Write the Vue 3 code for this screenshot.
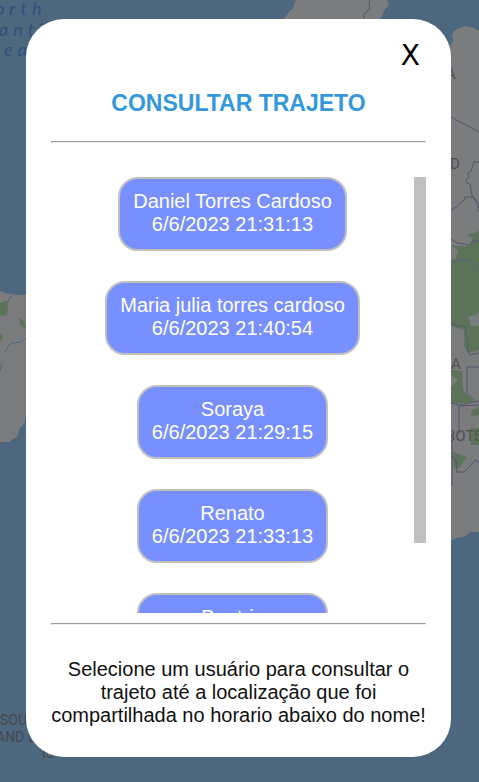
<script setup>
const shares = [
  { name: 'Daniel Torres Cardoso', time: '6/6/2023 21:31:13' },
  { name: 'Maria julia torres cardoso', time: '6/6/2023 21:40:54' },
  { name: 'Soraya', time: '6/6/2023 21:29:15' },
  { name: 'Renato', time: '6/6/2023 21:33:13' },
  { name: 'Beatriz', time: '6/6/2023 21:35:42' },
]
</script>

<template>
  <div class="page">
    <svg class="map" viewBox="0 0 479 782" preserveAspectRatio="xMidYMid slice" aria-hidden="true">
      <rect width="479" height="782" fill="#4d677f" />
      <g fill="#7b7c7e">
        <path d="M296 0H387L389 5L385 9L383 14L381 18L377 20H283L289 12L293 8Z" />
        <path d="M479 31L474 28L466 26L460 28L454 31L452 36L453 40L451 45H440V550L451 541L456 538L466 536L470 532L479 532Z" />
        <path d="M0 291L5 293L12 294L18 295H26H50V415H26L24 424L20 428L18 434L17 437L11 440V442H0Z" />
      </g>
      <g fill="#5d7359">
        <path d="M451 245L457 246L470 246L473 238L468 236L468 234L475 233L479 231V312L472 318L468 321L451 325V252L456 250Z" />
        <path d="M451 323L479 318V350L469 353L464 346V330L451 326Z" />
        <path d="M451 370L462 371L463 390L474 402L451 404V387L458 380L452 376Z" />
        <path d="M472 410L479 407V415L471 417Z" />
        <path d="M453 452L467 457L460 467L454 469Z" />
        <path d="M471 428H479V445H471Z" />
        <path d="M0 303L7 300L8 308L7 315L0 316ZM19 317L24 321L26 329L20 325ZM0 334L3 336L2 340H0Z" />
      </g>
      <g fill="#7b7c7e">
        <path d="M451 246L458 250L456 258L451 260ZM468 317L474 315L479 317V326H471Z" />
        <path d="M451 332L459 331L464 338L459 345L452 340ZM452 355L462 354L464 361L456 366Z" />
      </g>
      <g fill="none" stroke="#56556b" stroke-width="1">
        <path d="M370 0L369 5L370 9L364 14V20M451 117L479 132M479 162H474L471 171L468 173L469 177L466 180L467 183L470 184L472 195L478 203V212M451 210L455 208L465 199V197H473L478 204M451 239L457 243L470 245L473 241L479 241M451 324L454 323L456 326H465L466 335L468 340L467 350L470 355L479 353M479 367H467V393L476 402M451 403L459 405L479 401M459 434V406L479 405M452 434V486M452 457L456 460L457 472L464 472L471 465L475 460L479 462" />
      </g>
      <g fill="none" stroke="#4d677f" stroke-width="1">
        <path d="M12 295L7 303M5 352L9 345L12 343L21 342L26 338M0 371L2 362M451 262L462 260L470 261L479 269" />
      </g>
      <g class="sea" fill="#2f507c">
        <text x="-5" y="15">orth</text>
        <text x="-1" y="36">anti</text>
        <text x="-9" y="56">cea</text>
      </g>
      <g class="land" fill="#505153">
        <text x="446" y="79">A</text>
        <text x="450" y="169">D</text>
        <text x="451" y="369">A</text>
        <text x="446" y="441">BOTSW</text>
      </g>
      <g class="islands" fill="#45484c">
        <text x="0" y="725">SOU</text>
        <text x="-4" y="742">AND S</text>
        <text x="42" y="758">IS</text>
      </g>
    </svg>

    <main class="dialog" role="dialog" aria-labelledby="dialog-title">
      <button class="close" type="button" aria-label="Fechar">X</button>
      <h1 id="dialog-title">CONSULTAR TRAJETO</h1>
      <hr />
      <div class="scroll">
        <div class="list">
          <button v-for="share in shares" :key="share.name" class="share" type="button">
            <span>{{ share.name }}</span>
            <span>{{ share.time }}</span>
          </button>
        </div>
        <div class="track"><div class="thumb"></div></div>
      </div>
      <hr />
      <p>Selecione um usuário para consultar o trajeto até a localização que foi compartilhada no horario abaixo do nome!</p>
    </main>
  </div>
</template>

<style>
body {
  margin: 0;
}
</style>

<style scoped>
.page {
  position: relative;
  box-sizing: border-box;
  height: 100vh;
  overflow: hidden;
  padding: 19px 28px 25px 26px;
  background: #4d677f;
  font-family: "Liberation Sans", Arial, sans-serif;
}
.map {
  position: absolute;
  inset: 0;
  width: 100%;
  height: 100%;
}
.sea {
  font: italic 18px Lato, sans-serif;
  letter-spacing: 5px;
}
.land {
  font: 15px Roboto, sans-serif;
}
.islands {
  font: 14px Roboto, sans-serif;
}
.dialog {
  position: relative;
  display: flex;
  flex-direction: column;
  box-sizing: border-box;
  height: 100%;
  padding: 20px 25px 30px;
  border-radius: 38px;
  background: #fff;
}
.close {
  align-self: flex-end;
  padding: 0;
  margin-right: 6px;
  border: 0;
  background: none;
  color: #000;
  font: 28px/34px "DejaVu Sans", Verdana, sans-serif;
  cursor: pointer;
}
h1 {
  margin: 16px 0 24px;
  color: #3498db;
  font-size: 23px;
  line-height: 28px;
  text-align: center;
}
hr {
  width: 100%;
  box-sizing: border-box;
  height: 2px;
  margin: 0;
  border: 1px inset #eee;
}
.scroll {
  display: flex;
  flex: 1;
  min-height: 0;
  margin: 34px 0 10px;
}
.list {
  display: flex;
  flex: 1;
  flex-direction: column;
  align-items: center;
  gap: 30px;
  overflow-y: auto;
  scrollbar-width: none;
}
.share {
  display: flex;
  flex: none;
  flex-direction: column;
  align-items: center;
  padding: 11px 13px 13px;
  border: 2px solid #c0c0c0;
  border-radius: 20px;
  background: #7890ff;
  color: #fff;
  font: 20px/23px "Liberation Sans", Arial, sans-serif;
  cursor: pointer;
}
.track {
  width: 12px;
}
.thumb {
  height: 84%;
  background: #c0c0c0;
}
p {
  margin: 33px 0 0;
  color: #111;
  font-size: 20px;
  line-height: 23px;
  text-align: center;
}
</style>
